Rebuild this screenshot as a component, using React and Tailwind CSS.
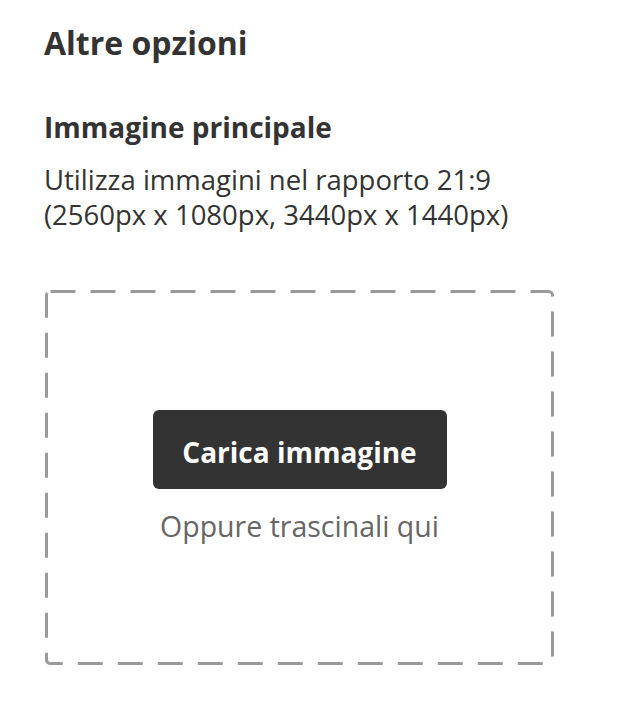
export default function App() {
  return (
    <div className="min-h-screen bg-white" style={{ fontFamily: '"Open Sans", "Noto Sans", sans-serif' }}>
      <div className="pl-[44px] pr-[70px] pt-[23px] text-[#333333]">
        {/* titolo */}
        <h2 className="text-[32px] font-bold leading-[40px]">Altre opzioni</h2>

        {/* immagine principale */}
        <h3 className="mt-[47px] text-[28px] font-bold leading-[34px]">Immagine principale</h3>
        <p className="mt-[18px] text-[27.5px] leading-[35px]">
          Utilizza immagini nel rapporto 21:9
          <br />
          (2560px x 1080px, 3440px x 1440px)
        </p>

        {/* area upload */}
        <div className="relative mt-[58px] ml-[1px] flex h-[375px] w-[509px] flex-col items-center pt-[120px]">
          <svg className="pointer-events-none absolute inset-0 h-full w-full" aria-hidden="true">
            <rect
              x="1.5"
              y="1.5"
              width="506"
              height="372"
              rx="4"
              ry="4"
              fill="none"
              stroke="#9a9a9a"
              strokeWidth="3"
              strokeDasharray="25 15"
            />
          </svg>
          <button className="h-[79px] w-[294px] rounded-[6px] bg-[#333333] pt-[4px] text-[28px] font-bold text-white">
            Carica immagine
          </button>
          <span className="mt-[17px] text-[28.5px] leading-[40px] text-[#666666]">Oppure trascinali qui</span>
        </div>
      </div>
    </div>
  )
}
